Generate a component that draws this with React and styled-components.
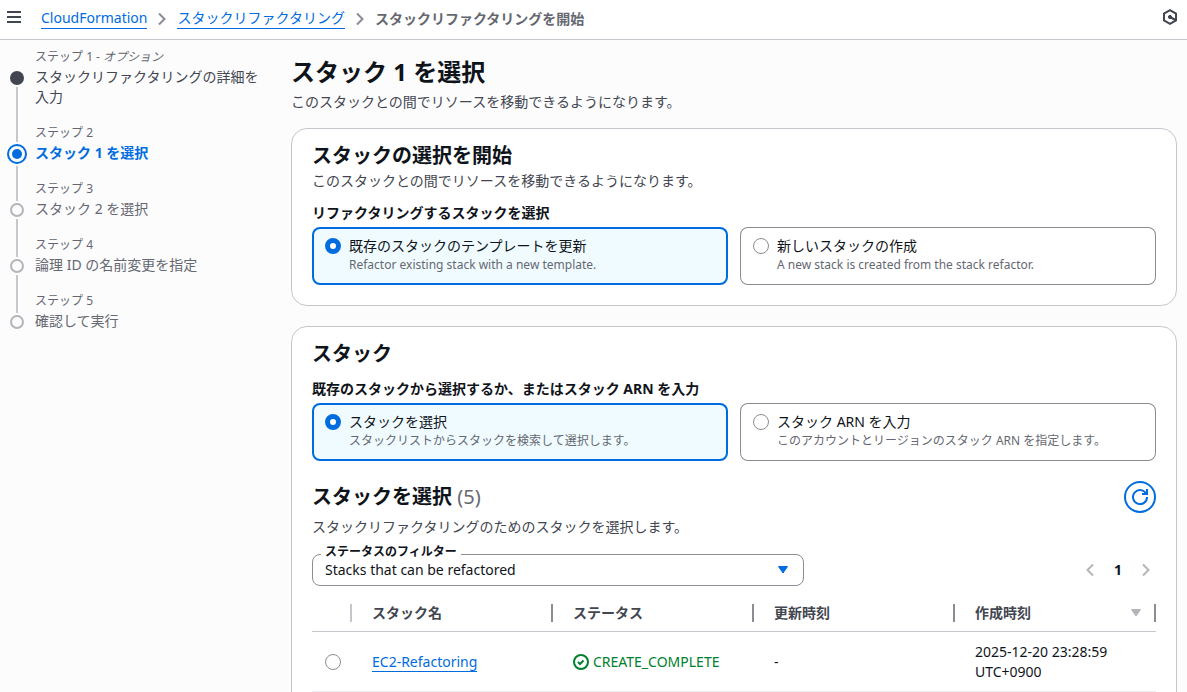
import React, { useState } from 'react';
import styled, { createGlobalStyle, css } from 'styled-components';

const color = {
  text: '#0f141a',
  heading: '#424650',
  muted: '#656871',
  link: '#006ce0',
  border: '#c6c6cd',
  control: '#8c8c94',
  disabled: '#b4b4bb',
  success: '#00802f',
  selected: '#f0fbff',
};

const GlobalStyle = createGlobalStyle`
  * {
    box-sizing: border-box;
  }

  body {
    margin: 0;
    background: #fcfcfd;
    color: ${color.text};
    font-family: "Noto Sans", "Noto Sans CJK JP", sans-serif;
    font-size: 14px;
    line-height: 20px;
  }

  button, select, input {
    font: inherit;
    color: inherit;
    margin: 0;
  }
`;

const steps = [
  { title: 'スタックリファクタリングの詳細を入力', optional: true, state: 'done' },
  { title: 'スタック 1 を選択', state: 'active' },
  { title: 'スタック 2 を選択', state: 'todo' },
  { title: '論理 ID の名前変更を指定', state: 'todo' },
  { title: '確認して実行', state: 'todo' },
];

const startOptions = [
  {
    value: 'existing',
    label: '既存のスタックのテンプレートを更新',
    description: 'Refactor existing stack with a new template.',
  },
  {
    value: 'new',
    label: '新しいスタックの作成',
    description: 'A new stack is created from the stack refactor.',
  },
];

const sourceOptions = [
  {
    value: 'choose',
    label: 'スタックを選択',
    description: 'スタックリストからスタックを検索して選択します。',
  },
  {
    value: 'arn',
    label: 'スタック ARN を入力',
    description: 'このアカウントとリージョンのスタック ARN を指定します。',
  },
];

const stacks = [
  { name: 'EC2-Refactoring', status: 'CREATE_COMPLETE', updated: '-', created: '2025-12-20 23:28:59 UTC+0900' },
];

const AngleRight = () => (
  <Icon viewBox="0 0 16 16" aria-hidden="true"><path d="M5 2.5 10.5 8 5 13.5" /></Icon>
);

const AngleLeft = () => (
  <Icon viewBox="0 0 16 16" aria-hidden="true"><path d="M11 2.5 5.5 8l5.5 5.5" /></Icon>
);

const CaretDown = () => (
  <Icon viewBox="0 0 16 16" aria-hidden="true">
    <path d="M3.500 4.500h9L8 11z" fill="currentColor" strokeWidth="1" strokeLinejoin="round" />
  </Icon>
);

const TileGroup = ({ legend, name, options, initial }) => {
  const [value, setValue] = useState(initial);

  return (
    <Fieldset>
      <Legend>{legend}</Legend>
      <Tiles>
        {options.map((option) => (
          <Tile key={option.value} $selected={value === option.value}>
            <Radio
              name={name}
              value={option.value}
              checked={value === option.value}
              onChange={() => setValue(option.value)}
            />
            <span>
              <TileLabel>{option.label}</TileLabel>
              <TileText>{option.description}</TileText>
            </span>
          </Tile>
        ))}
      </Tiles>
    </Fieldset>
  );
};

const StepNavigation = () => (
  <Steps aria-label="ステップ">
    {steps.map((step, index) => (
      <Step key={step.title}>
        <Track>
          <LineAbove $state={step.state} $hidden={index === 0} />
          <Marker $state={step.state} />
          {index < steps.length - 1 && <LineBelow />}
        </Track>
        <StepBody $last={index === steps.length - 1}>
          <StepLabel>ステップ {index + 1}{step.optional && <> - <i>オプション</i></>}</StepLabel>
          <StepTitle $state={step.state}>{step.title}</StepTitle>
        </StepBody>
      </Step>
    ))}
  </Steps>
);

const StackTable = () => (
  <Table>
    <thead>
      <tr>
        <HeadCell $select><Divider $light /></HeadCell>
        <HeadCell><HeadContent>スタック名<Divider /></HeadContent></HeadCell>
        <HeadCell><HeadContent>ステータス<Divider /></HeadContent></HeadCell>
        <HeadCell><HeadContent>更新時刻<Divider /></HeadContent></HeadCell>
        <HeadCell>
          <HeadContent>作成時刻<SortIcon><CaretDown /></SortIcon><Divider /></HeadContent>
        </HeadCell>
      </tr>
    </thead>
    <tbody>
      {stacks.map((stack) => (
        <tr key={stack.name}>
          <Cell $select><Radio name="stack" aria-label={stack.name} /></Cell>
          <Cell><Link href="#stack">{stack.name}</Link></Cell>
          <Cell>
            <Status>
              <Icon viewBox="0 0 16 16" aria-hidden="true">
                <circle cx="8" cy="8" r="7" />
                <path d="m5 8 2 2 3.5-3.5" />
              </Icon>
              {stack.status}
            </Status>
          </Cell>
          <Cell>{stack.updated}</Cell>
          <Cell>{stack.created}</Cell>
        </tr>
      ))}
    </tbody>
  </Table>
);

const App = () => (
  <Page>
    <GlobalStyle />
    <TopBar>
      <IconButton aria-label="メニュー">
        <Icon viewBox="0 0 16 16"><path d="M1 3h14M1 8h14M1 13h14" /></Icon>
      </IconButton>
      <Breadcrumbs aria-label="パンくずリスト">
        <Link href="#cloudformation">CloudFormation</Link>
        <AngleRight />
        <Link href="#refactoring">スタックリファクタリング</Link>
        <AngleRight />
        <Current>スタックリファクタリングを開始</Current>
      </Breadcrumbs>
      <IconButton aria-label="設定">
        <Icon viewBox="0 0 16 16">
          <path d="M8 1.2 14 4.6v6.8l-6 3.4-6-3.4V4.6z" />
          <circle cx="8" cy="8" r="1.6" fill="currentColor" strokeWidth="1" />
          <path d="m8 8 5.5 3" />
        </Icon>
      </IconButton>
    </TopBar>

    <Layout>
      <StepNavigation />
      <Main>
        <div>
          <PageTitle>スタック 1 を選択</PageTitle>
          <Description>このスタックとの間でリソースを移動できるようになります。</Description>
        </div>

        <Card>
          <CardTitle>スタックの選択を開始</CardTitle>
          <Description>このスタックとの間でリソースを移動できるようになります。</Description>
          <TileGroup
            legend="リファクタリングするスタックを選択"
            name="start"
            options={startOptions}
            initial="existing"
          />
        </Card>

        <Card>
          <CardTitle>スタック</CardTitle>
          <TileGroup
            legend="既存のスタックから選択するか、またはスタック ARN を入力"
            name="source"
            options={sourceOptions}
            initial="choose"
          />
          <TableHeader>
            <CardTitle>スタックを選択 <Count>(5)</Count></CardTitle>
            <RefreshButton aria-label="更新">
              <Icon viewBox="0 0 16 16">
                <path d="M10 5h5V0" />
                <path d="M15 8a7 7 0 1 1-.7-3" />
              </Icon>
            </RefreshButton>
          </TableHeader>
          <Description>スタックリファクタリングのためのスタックを選択します。</Description>
          <Toolbar>
            <SelectField>
              <SelectLabel htmlFor="status-filter">ステータスのフィルター</SelectLabel>
              <Select id="status-filter">
                <option>Stacks that can be refactored</option>
              </Select>
              <SelectIcon><CaretDown /></SelectIcon>
            </SelectField>
            <Pagination aria-label="ページ">
              <PageButton disabled aria-label="前へ"><AngleLeft /></PageButton>
              <PageButton aria-current="page">1</PageButton>
              <PageButton disabled aria-label="次へ"><AngleRight /></PageButton>
            </Pagination>
          </Toolbar>
          <StackTable />
        </Card>
      </Main>
    </Layout>
  </Page>
);

export default App;

const Page = styled.div`
  display: flex;
  flex-direction: column;
  height: 100vh;
  overflow: hidden;
`;

const Icon = styled.svg`
  display: block;
  flex: none;
  width: 16px;
  height: 16px;
  fill: none;
  stroke: currentColor;
  stroke-width: 2;
`;

const TopBar = styled.header`
  display: flex;
  align-items: center;
  flex: none;
  height: 40px;
  padding: 0 9px 5px 6px;
  background: #fff;
  border-bottom: 1px solid ${color.border};
`;

const IconButton = styled.button`
  padding: 0;
  border: 0;
  background: none;
  color: ${color.heading};
`;

const Breadcrumbs = styled.nav`
  display: flex;
  align-items: center;
  flex: 1;
  gap: 7px;
  padding: 3px 0 0 19px;
  color: ${color.control};
`;

const Link = styled.a`
  color: ${color.link};
  text-decoration: none;
  border-bottom: 1px solid ${color.link};
`;

const Current = styled.span`
  color: ${color.muted};
  font-weight: 700;
`;

const Layout = styled.div`
  display: grid;
  grid-template-columns: 281px minmax(0, 1fr);
  flex: 1;
  min-height: 0;
`;

const Steps = styled.ol`
  margin: 0;
  padding: 7px 16px 0 7px;
  list-style: none;
`;

const Step = styled.li`
  display: grid;
  grid-template-columns: 20px minmax(0, 1fr);
  gap: 8px;
`;

const Track = styled.div`
  display: flex;
  flex-direction: column;
  align-items: center;
  gap: 2px;
`;

const LineAbove = styled.div`
  width: 2px;
  height: ${props => props.$state === 'active' ? '19px' : '22px'};
  background: ${props => props.$hidden ? 'transparent' : color.border};
`;

const LineBelow = styled.div`
  flex: 1;
  width: 2px;
  background: ${color.border};
`;

const Marker = styled.div`
  width: 14px;
  height: 14px;
  border: 2px solid ${color.disabled};
  border-radius: 50%;

  ${props => props.$state === 'done' && css`
    border-color: ${color.heading};
    background: ${color.heading};
  `}

  ${props => props.$state === 'active' && css`
    width: 20px;
    height: 20px;
    padding: 3px;
    border-color: ${color.link};
    background: ${color.link} content-box;
  `}
`;

const StepBody = styled.div`
  padding-bottom: ${props => props.$last ? '0' : '16px'};
`;

const StepLabel = styled.div`
  color: ${color.muted};
  font-size: 12px;
`;

const StepTitle = styled.div`
  color: ${props => props.$state === 'active' ? color.link : props.$state === 'done' ? color.heading : color.muted};
  font-weight: ${props => props.$state === 'active' ? 700 : 400};
`;

const Main = styled.main`
  display: flex;
  flex-direction: column;
  gap: 16px;
  padding: 17px 10px 0;
  overflow: hidden;
`;

const PageTitle = styled.h1`
  margin: 0 0 3px;
  font-size: 24px;
  line-height: 30px;
`;

const Description = styled.p`
  margin: 0;
  padding-top: 2px;
  color: ${color.heading};
`;

const Card = styled.section`
  flex: none;
  padding: 14px 20px 20px;
  margin-bottom: 4px;
  background: #fff;
  border: 1px solid ${color.border};
  border-radius: 16px;
`;

const CardTitle = styled.h2`
  margin: 0;
  font-size: 20px;
  line-height: 26px;
`;

const Count = styled.span`
  color: ${color.muted};
  font-weight: 400;
`;

const Fieldset = styled.fieldset`
  margin: 0;
  padding: 12px 0 0;
  border: 0;
`;

const Legend = styled.legend`
  padding: 12px 0 0;
  font-weight: 700;
  margin-bottom: -8px;
`;

const Tiles = styled.div`
  display: grid;
  grid-template-columns: 1fr 1fr;
  gap: 12px;
`;

const Tile = styled.label`
  display: flex;
  align-items: flex-start;
  gap: 8px;
  padding: 9px 13px 11px;
  border-radius: 8px;
  background: ${props => props.$selected ? color.selected : '#fff'};
  box-shadow: inset 0 0 0 ${props => props.$selected ? `2px ${color.link}` : `1px ${color.control}`};
`;

const Radio = styled.input.attrs({ type: 'radio' })`
  appearance: none;
  display: block;
  flex: none;
  width: 16px;
  height: 16px;
  border: 1px solid ${color.control};
  border-radius: 50%;
  background: #fff;

  ${Tile} & {
    margin-top: 2px;
  }

  &:checked {
    border: 5px solid ${color.link};
  }
`;

const TileLabel = styled.span`
  display: block;
`;

const TileText = styled.span`
  display: block;
  color: ${color.muted};
  font-size: 12px;
  line-height: 18px;
`;

const TableHeader = styled.div`
  display: flex;
  align-items: center;
  justify-content: space-between;
  padding: 20px 0 2px;
`;

const RefreshButton = styled.button`
  display: grid;
  place-items: center;
  width: 32px;
  height: 32px;
  padding: 0;
  border: 2px solid ${color.link};
  border-radius: 50%;
  background: #fff;
  color: ${color.link};
`;

const Toolbar = styled.div`
  display: flex;
  align-items: center;
  justify-content: space-between;
  padding: 17px 0 8px;
`;

const SelectField = styled.div`
  position: relative;
  flex: 0 1 492px;
`;

const SelectLabel = styled.label`
  position: absolute;
  top: -10px;
  left: 9px;
  padding: 0 4px;
  background: #fff;
  font-size: 12px;
  line-height: 16px;
  font-weight: 700;
`;

const Select = styled.select`
  appearance: none;
  display: block;
  width: 100%;
  height: 32px;
  padding: 0 36px 0 12px;
  border: 1px solid ${color.control};
  border-radius: 8px;
  background: #fff;
`;

const SelectIcon = styled.span`
  position: absolute;
  top: 8px;
  right: 13px;
  color: ${color.link};
  pointer-events: none;
`;

const Pagination = styled.nav`
  display: flex;
  gap: 8px;
`;

const PageButton = styled.button`
  display: grid;
  place-items: center;
  width: 20px;
  height: 24px;
  padding: 0;
  border: 0;
  background: none;
  font-weight: 700;

  &:disabled {
    color: ${color.disabled};
  }
`;

const Table = styled.table`
  width: 100%;
  table-layout: fixed;
  border-collapse: separate;
  border-spacing: 0;
`;

const HeadCell = styled.th`
  width: ${props => props.$select ? '40px' : 'auto'};
  height: 38px;
  padding: 0 0 0 20px;
  border-bottom: 1px solid ${color.border};
  color: ${color.heading};
  text-align: left;
`;

const HeadContent = styled.div`
  display: flex;
  align-items: center;
`;

const Divider = styled.div`
  width: 2px;
  height: 18px;
  margin-left: auto;
  background: ${props => props.$light ? color.border : color.control};
`;

const SortIcon = styled.span`
  margin-left: auto;
  color: ${color.disabled};

  & + ${Divider} {
    margin-left: 10px;
  }
`;

const Cell = styled.td`
  height: 60px;
  padding: ${props => props.$select ? '0 0 0 13px' : '0 20px'};
  border-bottom: 1px solid #ebebf0;
`;

const Status = styled.span`
  display: flex;
  align-items: center;
  gap: 4px;
  color: ${color.success};
`;
